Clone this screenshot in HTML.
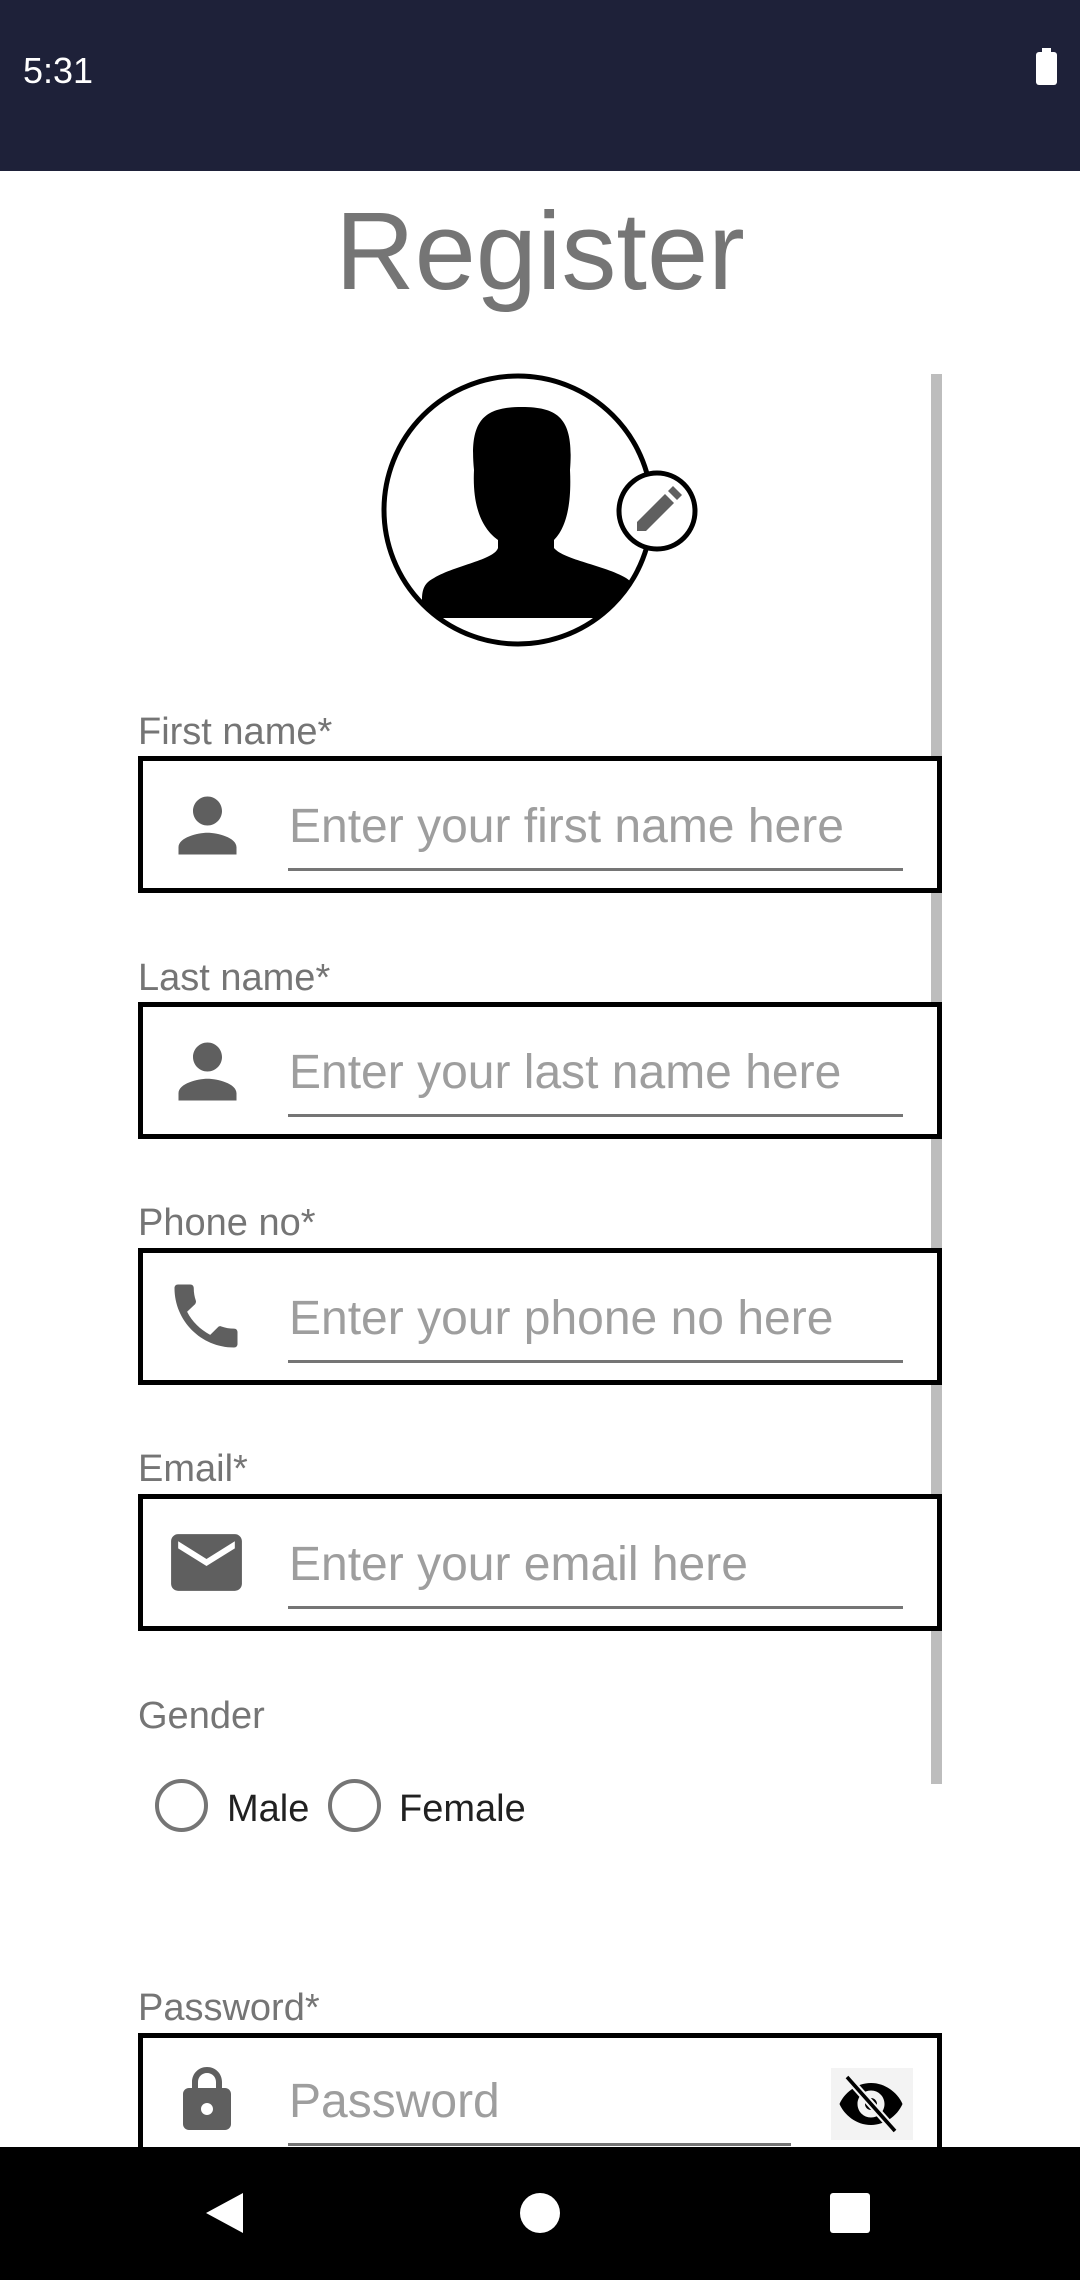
<!DOCTYPE html>
<html><head><meta charset="utf-8"><style>
*{margin:0;padding:0;box-sizing:border-box}
body{width:1080px;height:2280px;position:relative;background:#fff;font-family:"Liberation Sans",sans-serif;overflow:hidden}
.abs{position:absolute}
.lbl{position:absolute;left:138px;font-size:38px;color:#757575;line-height:1}
.box{position:absolute;left:138px;width:804px;height:137px;border:5px solid #000;background:#fff}
.ph{position:absolute;left:146px;top:42px;font-size:48px;color:#9e9e9e;line-height:1;white-space:nowrap}
.ul{position:absolute;left:145px;top:107px;width:615px;height:3px;background:#757575}
.ic{position:absolute;left:21px;top:21px;width:87px;height:87px}
</style></head><body>
<div class="abs" style="left:0;top:0;width:1080px;height:171px;background:#1e2139"></div>
<div class="abs" style="left:23px;top:50px;font-size:36px;color:#fff">5:31</div>
<div class="abs" style="left:1036px;top:52px;width:21px;height:33px;background:#fff;border-radius:3px"></div>
<div class="abs" style="left:1042px;top:48px;width:9px;height:6px;background:#fff"></div>

<div class="abs" style="left:0;width:1080px;top:186px;text-align:center;font-size:110px;color:#757575;line-height:1.2">Register</div>

<div class="abs" style="left:931px;top:374px;width:11px;height:1410px;background:#bdbdbd"></div>

<svg class="abs" style="left:374px;top:366px" width="340" height="290" viewBox="370 366 340 290">
<defs><clipPath id="c"><circle cx="514" cy="510" r="134"/></clipPath></defs>
<circle cx="514" cy="510" r="134" fill="#fff"/>
<g clip-path="url(#c)">
<path d="M470 470 C465 420 480 407 518 407 C556 407 570 420 566 470 C568 510 560 530 550 540 L550 548 C560 560 600 565 622 578 C630 583 632 590 632 600 L632 618 L418 618 L418 600 C418 590 420 583 430 578 C452 565 490 560 494 548 L494 540 C480 530 468 510 470 470Z" fill="#000"/>
</g>
<circle cx="514" cy="510" r="134" fill="none" stroke="#000" stroke-width="5"/>
<circle cx="653" cy="511" r="38" fill="#fff" stroke="#000" stroke-width="5"/>
<path d="M633 531 L633 522 L661 494 L670 503 L642 531Z M664 491 L669 486 L678 495 L673 500Z" fill="#5f5f5f"/>
</svg>

<div class="lbl" style="top:713px">First name*</div>
<div class="box" style="top:756px"><svg class="ic" viewBox="0 0 24 24"><path fill="#5f5f5f" d="M12 12c2.2 0 4-1.8 4-4s-1.8-4-4-4-4 1.8-4 4 1.8 4 4 4zm0 2c-2.7 0-8 1.3-8 4v2h16v-2c0-2.7-5.3-4-8-4z"/></svg><div class="ph">Enter your first name here</div><div class="ul"></div></div>

<div class="lbl" style="top:959px">Last name*</div>
<div class="box" style="top:1002px"><svg class="ic" viewBox="0 0 24 24"><path fill="#5f5f5f" d="M12 12c2.2 0 4-1.8 4-4s-1.8-4-4-4-4 1.8-4 4 1.8 4 4 4zm0 2c-2.7 0-8 1.3-8 4v2h16v-2c0-2.7-5.3-4-8-4z"/></svg><div class="ph">Enter your last name here</div><div class="ul"></div></div>

<div class="lbl" style="top:1204px">Phone no*</div>
<div class="box" style="top:1248px"><svg class="ic" style="left:21px;top:21px;width:84px;height:84px" viewBox="0 0 24 24"><path fill="#5f5f5f" d="M6.6 10.8c1.4 2.8 3.8 5.1 6.6 6.6l2.2-2.2c.3-.3.7-.4 1-.2 1.1.4 2.3.6 3.6.6.6 0 1 .4 1 1V20c0 .6-.4 1-1 1-9.4 0-17-7.6-17-17 0-.6.4-1 1-1h3.5c.6 0 1 .4 1 1 0 1.3.2 2.5.6 3.6.1.3 0 .7-.2 1l-2.3 2.2z"/></svg><div class="ph">Enter your phone no here</div><div class="ul"></div></div>

<div class="lbl" style="top:1450px">Email*</div>
<div class="box" style="top:1494px"><svg class="ic" style="left:21px;top:21px;width:85px;height:85px" viewBox="0 0 24 24"><path fill="#5f5f5f" d="M20 4H4c-1.1 0-2 .9-2 2v12c0 1.1.9 2 2 2h16c1.1 0 2-.9 2-2V6c0-1.1-.9-2-2-2zm0 4l-8 5-8-5V6l8 5 8-5v2z"/></svg><div class="ph">Enter your email here</div><div class="ul"></div></div>

<div class="lbl" style="top:1697px">Gender</div>
<div class="abs" style="left:155px;top:1779px;width:53px;height:53px;border:4px solid #757575;border-radius:50%"></div>
<div class="abs" style="left:227px;top:1788px;font-size:38px;color:#212121">Male</div>
<div class="abs" style="left:328px;top:1779px;width:53px;height:53px;border:4px solid #757575;border-radius:50%"></div>
<div class="abs" style="left:399px;top:1788px;font-size:38px;color:#212121">Female</div>

<div class="lbl" style="top:1989px">Password*</div>
<div class="box" style="top:2033px;height:160px"><svg class="ic" style="top:26px;left:28px;width:72px;height:72px" viewBox="0 0 24 24"><path fill="#5f5f5f" d="M18 8h-1V6c0-2.8-2.2-5-5-5S7 3.2 7 6v2H6c-1.1 0-2 .9-2 2v10c0 1.1.9 2 2 2h12c1.1 0 2-.9 2-2V10c0-1.1-.9-2-2-2zm-6 9c-1.1 0-2-.9-2-2s.9-2 2-2 2 .9 2 2-.9 2-2 2zM9 8V6c0-1.7 1.3-3 3-3s3 1.3 3 3v2H9z"/></svg><div class="ph" style="top:40px">Password</div><div class="ul" style="top:105px;width:503px"></div>
<div class="abs" style="left:688px;top:30px;width:82px;height:72px;background:#f3f3f3"></div>
<svg class="abs" style="left:692px;top:30px" width="72" height="72" viewBox="0 0 24 24"><path d="M12 5C7 5 3 8.5 1.5 12 3 15.5 7 19 12 19s9-3.5 10.5-7C21 8.5 17 5 12 5zm0 11.5c-2.5 0-4.5-2-4.5-4.5s2-4.5 4.5-4.5 4.5 2 4.5 4.5-2 4.5-4.5 4.5zm0-6.5c-1.1 0-2 .9-2 2s.9 2 2 2 2-.9 2-2-.9-2-2-2z" fill="#000"/><path d="M4 3L20 21" stroke="#f3f3f3" stroke-width="2.6"/><path d="M4 3L20 21" stroke="#000" stroke-width="1.2"/></svg>
</div>

<div class="abs" style="left:0;top:2147px;width:1080px;height:133px;background:#000"></div>
<svg class="abs" style="left:0;top:2147px" width="1080" height="133"><path d="M243 46 L243 86 L206 66Z" fill="#fff"/><circle cx="540" cy="66" r="20" fill="#fff"/><rect x="830" y="46" width="40" height="40" rx="3" fill="#fff"/></svg>
</body></html>
